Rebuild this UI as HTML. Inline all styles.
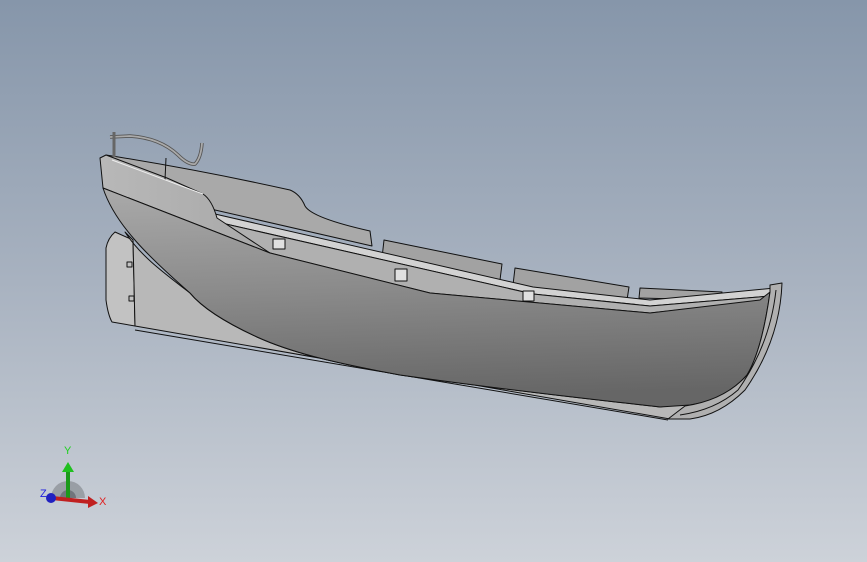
<!DOCTYPE html>
<html><head><style>
html,body{margin:0;padding:0}
body{width:867px;height:562px;overflow:hidden;background:linear-gradient(#8696aa 0%,#a8b2c0 50%,#cdd2d9 100%);font-family:"Liberation Sans",sans-serif}
svg{position:absolute;left:0;top:0}
</style></head><body>
<svg width="867" height="562" viewBox="0 0 867 562">
<defs>
<linearGradient id="hull" x1="0" y1="0" x2="0.1" y2="1">
<stop offset="0" stop-color="#aaaaaa"/><stop offset="0.5" stop-color="#8a8a8a"/><stop offset="1" stop-color="#666"/>
</linearGradient>
<linearGradient id="band" x1="0" y1="0" x2="1" y2="0">
<stop offset="0" stop-color="#b8b8b8"/><stop offset="1" stop-color="#a8a8a8"/>
</linearGradient>
</defs>
<g stroke="#111" stroke-width="1" stroke-linejoin="round">
<!-- skeg -->
<path d="M115,232 Q108,238 106,248 L106,300 Q108,315 112,322 L135,326 L133,240 Z" fill="#c2c2c2"/>
<rect x="127" y="262" width="5" height="5" fill="none"/>
<rect x="129" y="296" width="5" height="5" fill="none"/>
<!-- keel / lower region -->
<path d="M125,232 L133,240 L135,326 L670,419 L690,418 L700,400 L660,407 C600,400 520,392 400,375 C330,362 290,352 257,337 C220,320 200,305 190,293 C160,270 140,255 125,232 Z" fill="#b8b8b8"/>
<path d="M135,330 L668,420" fill="none"/>
<!-- far gunwale -->
<path d="M106,155 Q200,170 290,190 Q300,194 305,206 Q312,218 370,231 L372,246 L215,210 Z" fill="#a9a9a9"/>
<!-- seat backs -->
<path d="M384,240 L502,264 L500,280 L382,258 Z" fill="#a2a2a2"/>
<path d="M515,268 L629,287 L627,300 L513,285 Z" fill="#a2a2a2"/>
<path d="M640,288 L722,292 L720,300 L639,298 Z" fill="#a2a2a2"/>
<!-- light strip -->
<path d="M215,214 L533,287 L650,300 L775,288 L770,296 L650,306 L533,294 L217,222 Z" fill="#d2d2d2"/>
<!-- near inner faces -->
<path d="M217,222 L533,294 L650,306 L770,296 L770,300 L650,313 L430,293 L270,253 L103,188 Z" fill="#b0b0b0"/>
<rect x="273" y="239" width="12" height="10" fill="#e0e0e0"/>
<rect x="395" y="269" width="12" height="12" fill="#e0e0e0"/>
<rect x="523" y="291" width="11" height="10" fill="#e0e0e0"/>
<!-- near gunwale band -->
<path d="M100,158 L106,155 L167,178 L203,194 Q212,200 217,218 L270,253 L103,188 Z" fill="url(#band)"/>
<path d="M166,158 L165,180" fill="none"/>
<path d="M112,160 L203,194" fill="none" stroke="#eee"/>
<!-- hull -->
<path d="M103,188 L270,253 L430,293 L650,313 L760,300 L770,292 Q762,350 747,375 Q725,400 690,405 L660,407 C600,400 520,392 400,375 C330,362 290,352 257,337 C220,320 200,305 190,293 C150,258 115,225 103,188 Z" fill="url(#hull)"/>
<!-- stern rim -->
<path d="M770,285 L782,283 Q780,340 745,390 Q720,415 690,419 L668,419 L685,406 Q725,400 747,375 Q762,350 770,292 Z" fill="#b0b0b0"/>
<path d="M776,290 Q770,345 738,390 Q715,410 680,415" fill="none"/>
<!-- rail pipe -->
<path d="M110,137 L130,136 Q160,138 178,155 Q188,165 195,164 Q201,158 202,143" fill="none" stroke="#555" stroke-width="3.5"/>
<path d="M110,137 L130,136 Q160,138 178,155 Q188,165 195,164 Q201,158 202,143" fill="none" stroke="#aaa" stroke-width="1.8"/>
<path d="M114,132 L114,157" stroke="#666" stroke-width="3"/>
</g>
<!-- triad -->
<g>
<path d="M51,498 A17,17 0 0 1 85,498 Z" fill="#8e939a" opacity="0.8"/>
<path d="M60,498 A8,8 0 0 1 76,498 Z" fill="#5f646b" opacity="0.7"/>
<line x1="68" y1="498" x2="68" y2="470" stroke="#1a9a1a" stroke-width="4"/>
<polygon points="62,472 74,472 68,462" fill="#1fc01f"/>
<line x1="52" y1="498" x2="90" y2="502" stroke="#c02020" stroke-width="4"/>
<polygon points="88,496 88,508 98,503" fill="#c02020"/>
<circle cx="51" cy="498" r="5" fill="#2020c0"/>
<text x="64" y="454" font-size="11" fill="#20d020">Y</text>
<text x="99" y="505" font-size="11" fill="#e02020">X</text>
<text x="40" y="497" font-size="11" fill="#2020e0">Z</text>
</g>
</svg>
</body></html>
